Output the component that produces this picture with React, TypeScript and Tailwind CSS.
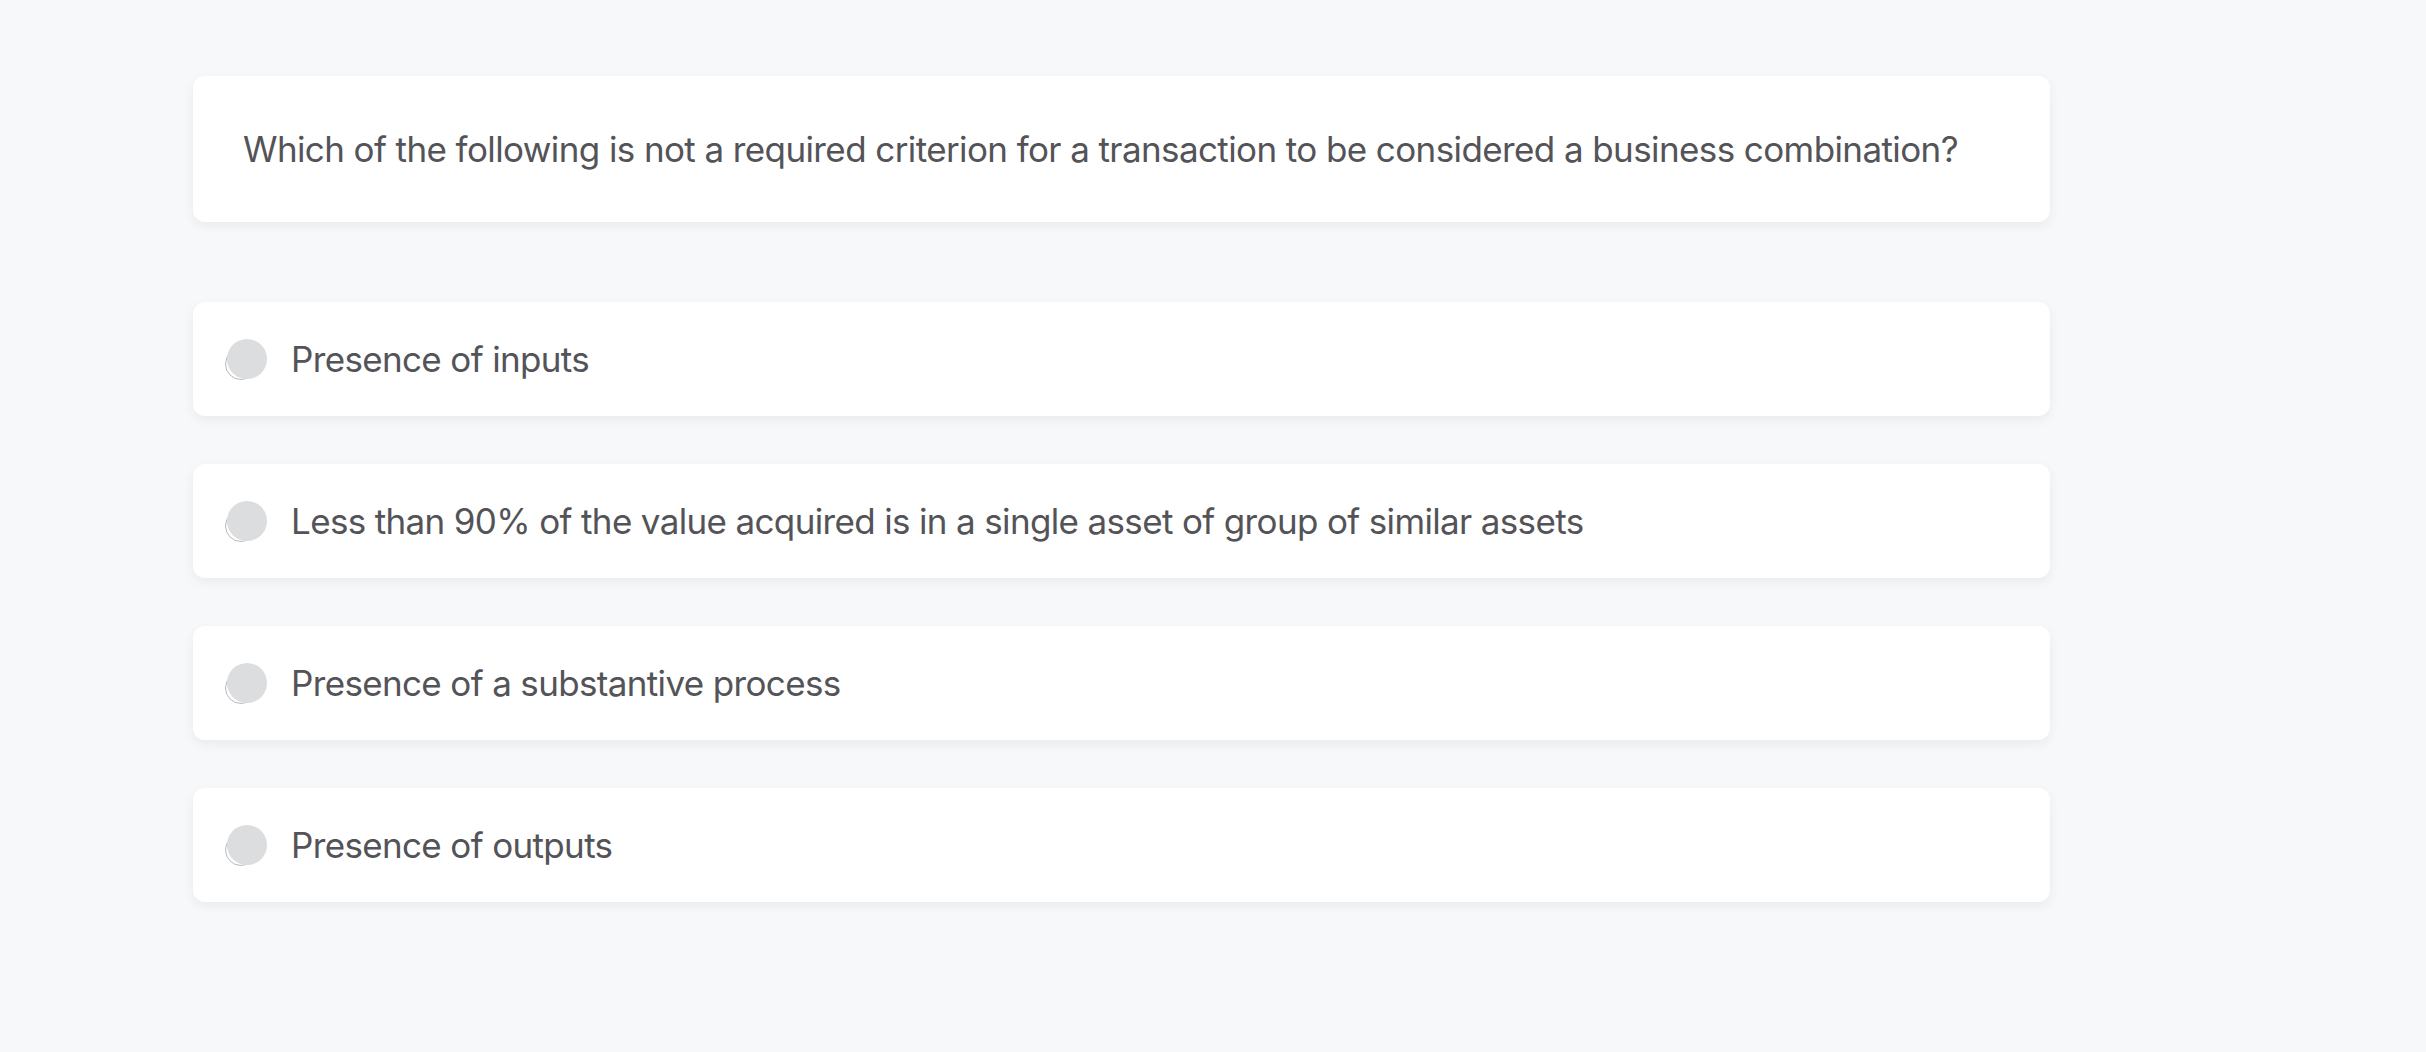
import React from "react";

const options = [
  "Presence of inputs",
  "Less than 90% of the value acquired is in a single asset of group of similar assets",
  "Presence of a substantive process",
  "Presence of outputs",
];

function OptionRow({ label }: { label: string }) {
  return (
    <label className="flex h-[114px] items-center rounded-[12px] bg-white pl-[34px] shadow-[0_4px_12px_rgba(0,0,0,0.06)]">
      <span className="relative h-[40px] w-[40px] shrink-0">
        <span className="absolute bottom-[-1px] left-[-2px] h-[32px] w-[32px] rounded-full border border-[#b9b9bc] bg-white" />
        <span className="absolute inset-0 rounded-full bg-[#dcdddf]" />
      </span>
      <span className="ml-[24px] text-[35px] tracking-[-0.65px] text-[#535358]">{label}</span>
    </label>
  );
}

export default function App() {
  return (
    <div className="min-h-[1052px] bg-[#f7f8fa] pt-[76px] font-['Inter',sans-serif]">
      <div className="ml-[193px] w-[1857px]">
        <div className="flex h-[146px] items-center rounded-[12px] bg-white px-[50px] shadow-[0_4px_12px_rgba(0,0,0,0.06)]">
          <p className="whitespace-nowrap text-[35px] tracking-[-0.6px] text-[#535358]">
            Which of the following is not a required criterion for a transaction to be considered a business combination?
          </p>
        </div>
        <div className="mt-[80px] flex flex-col gap-[48px]">
          {options.map((o) => (
            <OptionRow key={o} label={o} />
          ))}
        </div>
      </div>
    </div>
  );
}
